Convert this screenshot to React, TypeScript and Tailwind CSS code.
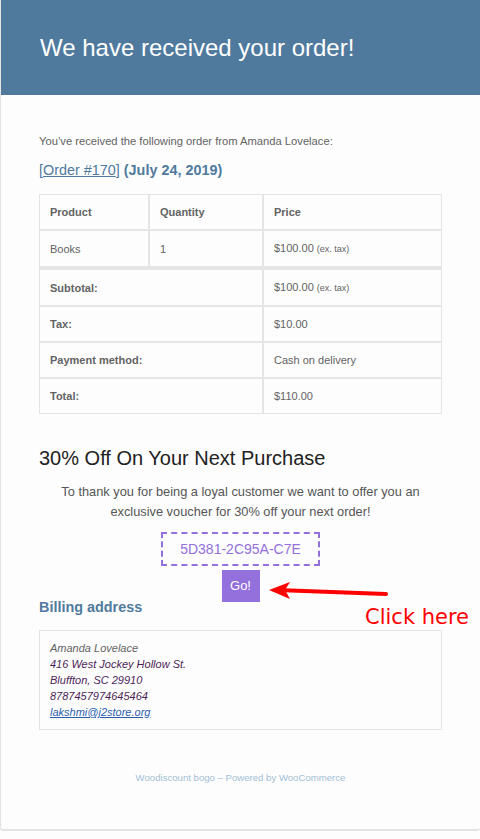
import React from 'react'

const font = { fontFamily: '"Liberation Sans", Arial, sans-serif' }

const cell = 'border border-[#e5e5e5] px-[10px] py-[10px] text-left align-middle leading-[14px]'

const App: React.FC = () => {
  return (
    <div className="min-h-screen bg-[#fdfdfd]" style={font}>
      <div className="relative rounded-b-[3px] border-b-2 border-l border-[#e4e4e4] bg-[#fdfdfd]">
        {/* header */}
        <div className="flex h-[95px] items-center bg-[#4f7a9e] pl-[39px]">
          <h1 className="text-[24px] font-normal text-white">We have received your order!</h1>
        </div>

        <div className="px-[38px] pt-[38px] text-[#636363]">
          <p className="text-[11.2px] leading-[16px]">
            You’ve received the following order from Amanda Lovelace:
          </p>
          <h2 className="mt-[12px] text-[14.4px] font-bold leading-[18px] text-[#4f7a9e]">
            <span className="font-normal">[</span>
            <span className="font-normal underline">Order #170</span>
            <span className="font-normal">]</span> (July 24, 2019)
          </h2>

          <table className="mt-[15px] w-[403px] border-separate border-spacing-0 text-[11px] text-[#636363]">
            <thead>
              <tr>
                <th className={`${cell} w-[110px] font-bold`}>Product</th>
                <th className={`${cell} w-[114px] font-bold`}>Quantity</th>
                <th className={`${cell} font-bold`}>Price</th>
              </tr>
            </thead>
            <tbody>
              <tr>
                <td className={cell}>Books</td>
                <td className={cell}>1</td>
                <td className={cell}>
                  $100.00 <span className="text-[9px]">(ex. tax)</span>
                </td>
              </tr>
            </tbody>
            <tfoot>
              <tr>
                <th colSpan={2} className={`${cell} border-t-[3px] font-bold`}>Subtotal:</th>
                <td className={`${cell} border-t-[3px]`}>
                  $100.00 <span className="text-[9px]">(ex. tax)</span>
                </td>
              </tr>
              <tr>
                <th colSpan={2} className={`${cell} font-bold`}>Tax:</th>
                <td className={cell}>$10.00</td>
              </tr>
              <tr>
                <th colSpan={2} className={`${cell} font-bold`}>Payment method:</th>
                <td className={cell}>Cash on delivery</td>
              </tr>
              <tr>
                <th colSpan={2} className={`${cell} font-bold`}>Total:</th>
                <td className={cell}>$110.00</td>
              </tr>
            </tfoot>
          </table>

          {/* voucher */}
          <h2 className="mt-[32px] text-[20px] leading-[24px] text-[#222222]">
            30% Off On Your Next Purchase
          </h2>
          <p className="mx-auto mt-[12px] w-[380px] text-center text-[12.8px] leading-[20px] text-[#555555]">
            To thank you for being a loyal customer we want to offer you an exclusive voucher for 30%
            off your next order!
          </p>
          <div className="mt-[10px] flex justify-center">
            <div className="flex h-[34px] w-[159px] items-center justify-center border-2 border-dashed border-[#9370db] text-[14px] text-[#9370db]">
              5D381-2C95A-C7E
            </div>
          </div>
          <div className="mt-[4px] flex h-[28px] items-start justify-center">
            <span className="flex h-[32px] w-[38px] shrink-0 items-center justify-center bg-[#9370db] text-[13px] text-white">
              Go!
            </span>
          </div>

          {/* billing */}
          <h2 className="text-[14.4px] font-bold leading-[18px] text-[#4f7a9e]">Billing address</h2>
          <div className="mt-[14px] w-[403px] border border-[#e5e5e5] px-[10px] py-[9px] text-[11px] italic leading-[16px]">
            <div className="text-[#636363]">Amanda Lovelace</div>
            <div className="text-[#4d1f58]">416 West Jockey Hollow St.</div>
            <div className="text-[#4d1f58]">Bluffton, SC 29910</div>
            <div className="text-[#4d1f58]">8787457974645464</div>
            <div className="text-[#2a5db0] underline">lakshmi@j2store.org</div>
          </div>

          <p className="pt-[41px] pb-[44px] text-center text-[9.6px] leading-[14px] text-[#a3bed6]">
            Woodiscount bogo – Powered by WooCommerce
          </p>
        </div>

        {/* annotation */}
        <svg className="pointer-events-none absolute left-[262px] top-[578px]" width="130" height="28" viewBox="0 0 130 28">
          <path d="M123 16 L14 12" stroke="#ff0000" strokeWidth="4" strokeLinecap="round" />
          <path d="M6 12 L27 4 L22 12 L27 21 Z" fill="#ff0000" />
        </svg>
        <span
          className="absolute left-[364px] top-[604px] text-[21px] leading-[26px] text-[#ff0000]"
          style={{ fontFamily: '"DejaVu Sans", sans-serif' }}
        >
          Click here
        </span>
      </div>
    </div>
  )
}

export default App
